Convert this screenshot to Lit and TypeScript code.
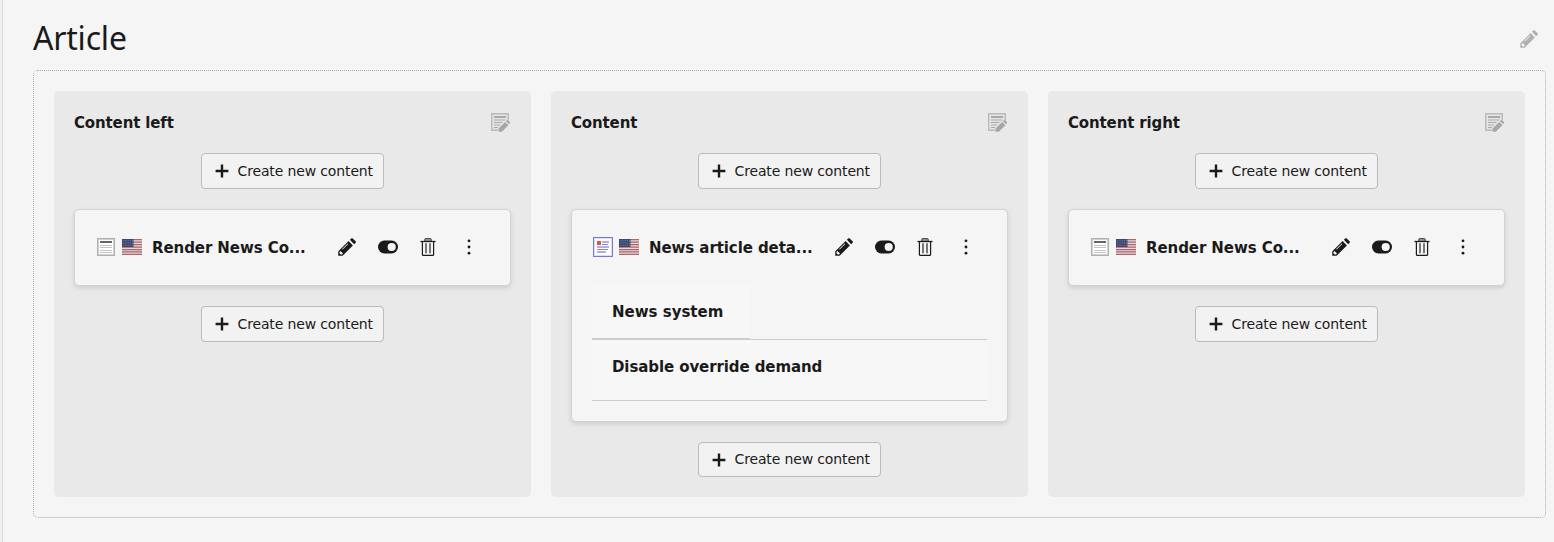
import { LitElement, html, css, svg, nothing } from "lit";
import { customElement, property } from "lit/decorators.js";

const PENCIL = "m9.293 3.293-8 8A.997.997 0 0 0 1 12v3h3c.265 0 .52-.105.707-.293l8-8-3.414-3.414zM8.6 5.1l.4.4-4.5 4.5-.4-.4 4.5-4.5zM4 14H3l-1-1v-1l.8-.8 2 2-.8.8zM13.707 5.707l1.354-1.354a.5.5 0 0 0 0-.707L12.354.939a.5.5 0 0 0-.707 0l-1.354 1.354 3.414 3.414z";

const icons: Record<string, unknown> = {
  pencil: svg`<svg viewBox="0 0 16 16" width="20" height="20" fill="currentColor"><path d=${PENCIL}/></svg>`,
  toggle: svg`<svg viewBox="0 0 20 20" width="20" height="20"><rect x="0" y="3.6" width="20" height="12.8" rx="6.4" fill="currentColor"/><circle cx="13.7" cy="10" r="4.1" fill="#f5f5f5"/></svg>`,
  trash: svg`<svg viewBox="0 0 20 20" width="20" height="20"><path d="M6.8 4V2.2Q6.8 1.6 7.4 1.6H12.6Q13.2 1.6 13.2 2.2V4" fill="#999" stroke="#444" stroke-width="1"/><path d="M2.5 4.5H17.5" stroke="currentColor" stroke-width="1.3"/><path d="M4.4 4.5V17.4Q4.4 18.4 5.4 18.4H14.6Q15.6 18.4 15.6 17.4V4.5" fill="none" stroke="currentColor" stroke-width="1.2"/><path d="M8 6.2V16.2M12 6.2V16.2" stroke="#444" stroke-width="1.4"/></svg>`,
  dots: svg`<svg viewBox="0 0 20 20" width="20" height="20" fill="currentColor"><circle cx="10" cy="3.8" r="1.4"/><circle cx="10" cy="10" r="1.4"/><circle cx="10" cy="16.2" r="1.4"/></svg>`,
  plus: svg`<svg viewBox="0 0 14 14" width="14" height="14"><path d="M7 .6V13.4M.6 7H13.4" stroke="currentColor" stroke-width="2.4"/></svg>`,
  note: svg`<svg viewBox="0 0 20 20" width="20" height="20"><path d="M1.7 1.7H18.3V9L9 18.3H1.7Z" fill="#e4e4e4"/><path d="M18.3 8V1.7H1.7V18.3H8" fill="none" stroke="#b9b9b9" stroke-width="1.4"/><path d="M4 5H16" stroke="#aaa" stroke-width="2"/><path d="M4 8H15.5M4 10.5H12.5M4 13H10M4 15.5H8" stroke="#aaa" stroke-width="1.2"/><path d="M8.6 19.8V16.6L15.2 10 18.4 13.2 11.8 19.8Z" fill="#a6a6a6"/><path d="M16 9.2 17.2 8.1Q17.6 7.8 18 8.1L20 10.2Q20.2 10.7 20 11L19.1 12.2Z" fill="#a6a6a6"/></svg>`,
  page: svg`<svg viewBox="0 0 20 20" width="20" height="20"><rect x="1.5" y="1.5" width="17" height="17" fill="#fff" stroke="#b0b0b0"/><rect x="2.5" y="2.5" width="15" height="15" fill="none" stroke="#d0d0d0"/><path d="M4 5H16" stroke="#666" stroke-width="2"/><path d="M4 8.5H16M4 10.5H16M4 13.5H16M4 15.5H16" stroke="#c4c4c4" stroke-width="1"/></svg>`,
  news: svg`<svg viewBox="0 0 20 20" width="20" height="20"><rect x=".5" y=".5" width="19" height="19" fill="#fff" stroke="#7878d5"/><rect x="1.5" y="1.5" width="17" height="17" fill="none" stroke="#dcdcf5"/><rect x="4" y="4" width="4" height="4" fill="#d9553e"/><path d="M9 5H16M4 10H16M4 15H13" stroke="#afafe6" stroke-width="2"/><path d="M9 7.5H15M4 12.5H15" stroke="#8585d8"/></svg>`,
  flag: svg`<svg viewBox="0 0 20 16" width="20" height="16"><rect width="20" height="16" fill="#e7d8d9"/><path d="M0 .7H20M0 3.1H20M0 5.6H20M0 8H20M0 10.5H20M0 12.9H20M0 15.3H20" stroke="#a9676d" stroke-width="1.25"/><rect width="11.5" height="8" fill="#3d4872"/><path d="M1.3 1.7H11M1.3 4H11M1.3 6.3H11" stroke="#8790ae" stroke-width=".8" stroke-dasharray="1 1.2"/></svg>`,
};

interface Column { title: string; element: string; icon: string; details: boolean }

const columns: Column[] = [
  { title: "Content left", element: "Render News Co...", icon: "page", details: false },
  { title: "Content", element: "News article deta...", icon: "news", details: true },
  { title: "Content right", element: "Render News Co...", icon: "page", details: false },
];

@customElement("content-column")
class ContentColumn extends LitElement {
  @property({ attribute: false }) column!: Column;

  static styles = css`
    :host { display: flex; flex-direction: column; align-items: center; box-sizing: border-box; padding: 20px; background: #e9e9e9; border-radius: 5px; min-width: 0; }
    svg { display: block; flex: none; }
    .head { align-self: stretch; display: flex; justify-content: space-between; align-items: center; height: 22px; margin-bottom: 20px; padding-right: 1px; }
    .title { font-weight: bold; font-size: 15px; line-height: 22px; padding-top: 2px; letter-spacing: -0.14px; }
    .create { display: flex; align-items: center; box-sizing: border-box; width: 183px; height: 36px; padding: 0 0 0 13px; gap: 8.5px; font: inherit; font-size: 14px; letter-spacing: -0.14px; color: #1a1a1a; background: #f2f2f2; border: 1px solid #bbb; border-radius: 4px; white-space: nowrap; }
    .create.short { height: 35px; }
    .create.short span { padding-bottom: 2px; }
    .card { align-self: stretch; box-sizing: border-box; margin: 20px 0; border: 1px solid #d2d3d4; border-radius: 5px; background: #f5f5f5; box-shadow: 0 2px 5px rgba(0,0,0,.12); padding: 20px; }
    .row { display: flex; align-items: center; height: 34px; padding: 0 0 1px 1px; }
    .flag { margin: 0 10px 0 6px; }
    .name { font-weight: bold; font-size: 15px; letter-spacing: -0.08px; padding-top: 2px; white-space: nowrap; flex: 1; min-width: 0; }
    .actions { display: flex; gap: 20.6px; padding-right: 11px; }
    .details { margin-top: 19px; font-weight: bold; font-size: 15px; }
    .tab { box-sizing: border-box; width: 158px; height: 55px; padding: 18px 20px 16px; line-height: 20px; background: #f7f7f7; border-bottom: 1px solid #ccc; }
    .body { box-sizing: border-box; height: 62px; padding: 17px 20px; line-height: 20px; letter-spacing: -0.09px; background: #f7f7f7; border-top: 1px solid #ccc; border-bottom: 1px solid #ccc; }
  `;

  private create(short = false) {
    return html`<button class="create ${short ? "short" : ""}">${icons.plus}<span>Create new content</span></button>`;
  }

  render() {
    const c = this.column;
    return html`
      <div class="head"><span class="title">${c.title}</span>${icons.note}</div>
      ${this.create()}
      <section class="card">
        <div class="row">
          ${icons[c.icon]}<span class="flag">${icons.flag}</span>
          <span class="name">${c.element}</span>
          <span class="actions">${icons.pencil}${icons.toggle}${icons.trash}${icons.dots}</span>
        </div>
        ${c.details ? html`<div class="details"><div class="tab">News system</div><div class="body">Disable override demand</div></div>` : nothing}
      </section>
      ${this.create(c.details)}
    `;
  }
}

@customElement("app-root")
class AppRoot extends LitElement {
  static styles = css`
    :host { display: block; box-sizing: border-box; height: 542px; overflow: hidden; padding-left: 2px; background: #f0f0f0; color: #1a1a1a; font-family: Verdana, "DejaVu Sans", sans-serif; }
    .page { box-sizing: border-box; height: 542px; border-left: 1px solid #d9d9d9; background: #f5f5f5; padding: 17px 8px 0 30px; }
    .heading { display: flex; align-items: center; justify-content: space-between; height: 44px; padding-right: 7px; }
    .heading svg { display: block; color: #b0b0b0; }
    h1 { margin: 0; font: 400 32px/44px "Source Sans Pro", "Noto Sans", sans-serif; letter-spacing: -0.2px; padding-bottom: 2px; }
    .grid { display: grid; grid-template-columns: repeat(3, 477px); gap: 20px; box-sizing: border-box; height: 448px; margin-top: 9px; padding: 20px; border: 1px dotted #aaa; border-radius: 5px; }
  `;

  render() {
    return html`
      <main class="page">
        <header class="heading"><h1>Article</h1>${icons.pencil}</header>
        <div class="grid">${columns.map((c) => html`<content-column .column=${c}></content-column>`)}</div>
      </main>
    `;
  }
}
